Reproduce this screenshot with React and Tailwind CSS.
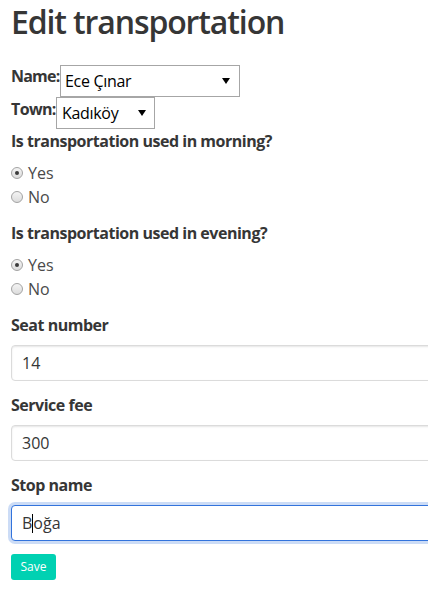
import React from "react";

const font = { fontFamily: '"Open Sans", "Noto Sans", sans-serif' };

function Radio({ checked, label }) {
  return (
    <div className="flex items-center h-[24px] text-[16px] leading-[24px] text-[#4a4a4a]">
      <span className="ml-[11px] mr-[5px] w-[12px] h-[12px] rounded-full border border-[#a3a3a3] bg-gradient-to-b from-[#f4f4f4] to-[#dcdcdc] flex items-center justify-center">
        {checked && <span className="w-[4px] h-[4px] rounded-full bg-[#3a3a3a]" />}
      </span>
      <span>{label}</span>
    </div>
  );
}

function Arrow() {
  return (
    <svg width="8" height="6" viewBox="0 0 8 6" className="shrink-0">
      <path d="M0 0 H8 L4 6 Z" fill="#000" />
    </svg>
  );
}

function Input({ children, focused }) {
  return (
    <div
      className={
        "h-[36px] w-[560px] ml-[11px] rounded-[4px] border bg-white flex items-center pl-[10px] text-[16px] text-[#363636] " +
        (focused
          ? "border-[#3273dc] shadow-[0_0_0_3px_rgba(50,115,220,0.25)]"
          : "border-[#dbdbdb] shadow-[inset_0_1px_2px_rgba(10,10,10,0.1)]")
      }
    >
      {children}
    </div>
  );
}

function Label({ children, className = "" }) {
  return (
    <div className={"ml-[11px] text-[16px] leading-[24px] font-bold text-[#363636] tracking-[-0.03em] " + className}>
      {children}
    </div>
  );
}

export default function App() {
  return (
    <div className="w-full h-[595px] overflow-hidden bg-white" style={font}>
      <div className="pt-[4px]">
        <h1 className="ml-[11px] text-[32px] leading-[36px] font-semibold text-[#363636] tracking-[-0.035em]">
          Edit transportation
        </h1>

        <div className="mt-[25px] flex items-start">
          <span className="ml-[11px] w-[49px] text-[16px] leading-[22px] font-bold text-[#363636] tracking-[-0.05em] whitespace-nowrap">
            Name:
          </span>
          <div className="w-[180px] h-[32px] border border-[#a6a6a6] bg-white flex items-center justify-between pl-[4px] pr-[9px] text-[16px] text-black tracking-[-0.02em]">
            <span>Ece Çınar</span>
            <Arrow />
          </div>
        </div>
        <div className="flex items-start">
          <span className="ml-[11px] w-[45px] text-[16px] leading-[22px] mt-[1px] font-bold text-[#363636] tracking-[-0.04em] whitespace-nowrap">
            Town:
          </span>
          <div className="w-[99px] h-[32px] border border-[#a6a6a6] bg-white flex items-center justify-between pl-[5px] pr-[8px] text-[16px] text-black tracking-[-0.02em]">
            <span>Kadıköy</span>
            <Arrow />
          </div>
        </div>

        <Label>Is transportation used in morning?</Label>
        <div className="mt-[8px]">
          <Radio checked label="Yes" />
          <Radio label="No" />
        </div>

        <Label className="mt-[12px]">Is transportation used in evening?</Label>
        <div className="mt-[8px]">
          <Radio checked label="Yes" />
          <Radio label="No" />
        </div>

        <Label className="mt-[12px]">Seat number</Label>
        <div className="mt-[8px]">
          <Input>14</Input>
        </div>

        <Label className="mt-[12px]">Service fee</Label>
        <div className="mt-[8px]">
          <Input>300</Input>
        </div>

        <Label className="mt-[12px]">Stop name</Label>
        <div className="mt-[8px]">
          <Input focused>
            <span>B</span>
            <span className="inline-block w-px h-[19px] bg-black" />
            <span>oğa</span>
          </Input>
        </div>

        <div className="mt-[12px] ml-[11px]">
          <button className="w-[45px] h-[26px] rounded-[3px] bg-[#00d1b2] text-white text-[12px] leading-[26px] text-center">
            Save
          </button>
        </div>
      </div>
    </div>
  );
}
